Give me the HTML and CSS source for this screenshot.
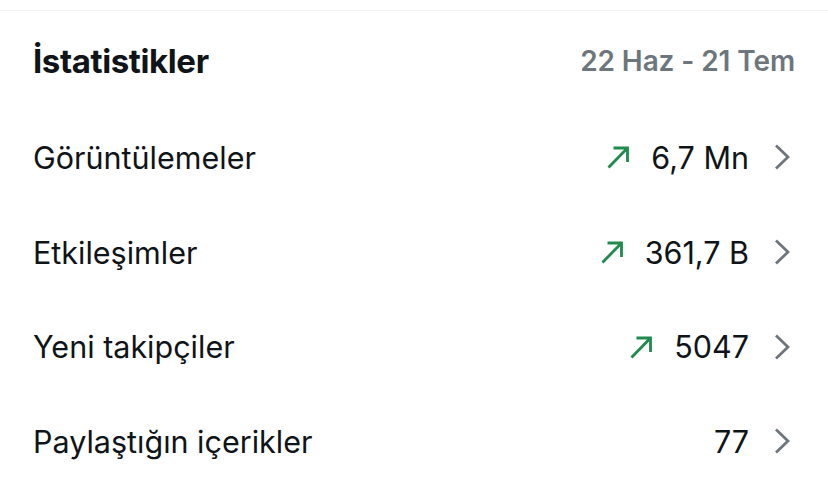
FILE: index.html
```html
<!DOCTYPE html>
<html lang="tr">
<head>
<meta charset="utf-8">
<link rel="stylesheet" href="styles.css">
</head>
<body>
<div class="top-line"></div>
<section class="stats">
  <header class="head">
    <h2 class="title">İstatistikler</h2>
    <span class="range">22 Haz - 21 Tem</span>
  </header>
  <div class="row">
    <span class="label">Görüntülemeler</span>
    <span class="right">
      <svg class="up" viewBox="0 0 24 24" width="24" height="24"><path d="M2.5 22.5L21.5 3M7.5 3H21.5V17" fill="none" stroke="#1f8b4c" stroke-width="2.8"/></svg>
      <span class="value">6,7 Mn</span>
      <svg class="chev" viewBox="0 0 16 26" width="16" height="26"><path d="M2 1.5L14 13L2 24.5" fill="none" stroke="#6e767d" stroke-width="2.8"/></svg>
    </span>
  </div>
  <div class="row">
    <span class="label">Etkileşimler</span>
    <span class="right">
      <svg class="up" viewBox="0 0 24 24" width="24" height="24"><path d="M2.5 22.5L21.5 3M7.5 3H21.5V17" fill="none" stroke="#1f8b4c" stroke-width="2.8"/></svg>
      <span class="value">361,7 B</span>
      <svg class="chev" viewBox="0 0 16 26" width="16" height="26"><path d="M2 1.5L14 13L2 24.5" fill="none" stroke="#6e767d" stroke-width="2.8"/></svg>
    </span>
  </div>
  <div class="row">
    <span class="label">Yeni takipçiler</span>
    <span class="right">
      <svg class="up" viewBox="0 0 24 24" width="24" height="24"><path d="M2.5 22.5L21.5 3M7.5 3H21.5V17" fill="none" stroke="#1f8b4c" stroke-width="2.8"/></svg>
      <span class="value">5047</span>
      <svg class="chev" viewBox="0 0 16 26" width="16" height="26"><path d="M2 1.5L14 13L2 24.5" fill="none" stroke="#6e767d" stroke-width="2.8"/></svg>
    </span>
  </div>
  <div class="row">
    <span class="label">Paylaştığın içerikler</span>
    <span class="right">
      <span class="value">77</span>
      <svg class="chev" viewBox="0 0 16 26" width="16" height="26"><path d="M2 1.5L14 13L2 24.5" fill="none" stroke="#6e767d" stroke-width="2.8"/></svg>
    </span>
  </div>
</section>
</body>
</html>
```
FILE: styles.css
```css
html, body {
  margin: 0;
  padding: 0;
  background: #ffffff;
}
body {
  font-family: Inter, "Noto Sans", Roboto, sans-serif;
  color: #0f1419;
  width: 828px;
  height: 499px;
  overflow: hidden;
}
.top-line {
  height: 10px;
  border-bottom: 1px solid #eff1f3;
}
.stats {
  padding: 0 38px 0 33px;
}
.head {
  display: flex;
  justify-content: space-between;
  align-items: center;
  height: 99px;
}
.title {
  margin: 0;
  font-size: 33px;
  font-weight: 700;
  letter-spacing: -0.4px;
}
.range {
  font-size: 28px;
  font-weight: 600;
  color: #6e767d;
  letter-spacing: -0.1px;
  margin-right: -5px;
}
.row {
  display: flex;
  justify-content: space-between;
  align-items: center;
  height: 94.7px;
}
.label {
  font-size: 30.5px;
  font-weight: 400;
}
.right {
  display: flex;
  align-items: center;
}
.up {
  margin-right: 21px;
}
.value {
  font-size: 30.5px;
  font-weight: 400;
}
.chev {
  margin-left: 25px;
}
```
